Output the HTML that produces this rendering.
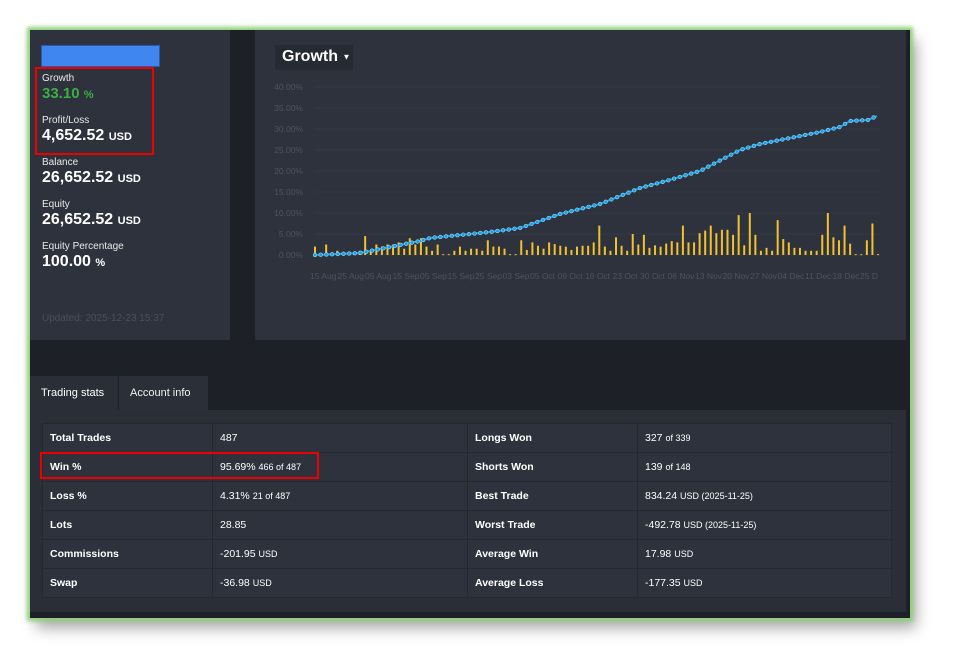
<!DOCTYPE html><html><head><meta charset="utf-8"><style>
*{margin:0;padding:0;box-sizing:border-box}
body{width:960px;height:667px;background:#fff;font-family:"Liberation Sans",sans-serif;position:relative;overflow:hidden}
.frame{position:absolute;left:30px;top:30px;width:880px;height:588px;background:#1e2027;box-shadow:0 0 3px 2px #8fd07a,6px 10px 14px rgba(0,0,0,.35)}
.lp{position:absolute;left:0;top:0;width:200px;height:310px;background:#2e323c}
.rp{position:absolute;left:225px;top:0;width:651px;height:310px;background:#2e323c}
.blue{position:absolute;left:11px;top:15px;width:119px;height:22px;background:#3f86f0;border:1px solid #2a5bb0}
.st{position:absolute;left:12px;color:#fff}
.lbl{font-size:10px;color:#e8e8e8}
.val{font-size:16px;font-weight:bold;margin-top:1px}
.val small{font-size:11px}
.red{position:absolute;border:2px solid #e00}
.upd{position:absolute;left:12px;top:283px;font-size:10px;color:#4a4f5a}
.gbtn{position:absolute;left:20px;top:15px;width:78px;height:25px;background:#262a32;color:#fff;font-size:16px;font-weight:bold;padding:3px 7px;white-space:nowrap}
.tabs{position:absolute;top:346px;left:0;height:34px}
.tab{position:absolute;top:0;height:34px;font-size:11px;color:#fff;padding:11px 11px;white-space:nowrap}
.cont{position:absolute;left:0;top:380px;width:876px;height:202px;background:#2a2e37}
table{position:absolute;left:12px;top:13px;width:850px;border-collapse:collapse}
td{height:29px;border:1px solid #252830;background:#2e323c;font-size:10.5px;color:#fff;padding:0 7px}
td.k{font-weight:bold}
td small{font-size:9px}
</style></head><body>
<div class="frame" style="box-shadow:0 0 4px 3px #8fd07a,6px 10px 14px rgba(0,0,0,.35)">
<div class="lp">
<div class="blue"></div>
<div class="st" style="top:43px"><div class="lbl">Growth</div><div class="val" style="color:#3cb043;font-size:15px">33.10 <small>%</small></div></div>
<div class="st" style="top:85px"><div class="lbl">Profit/Loss</div><div class="val">4,652.52 <small>USD</small></div></div>
<div class="st" style="top:127px"><div class="lbl">Balance</div><div class="val">26,652.52 <small>USD</small></div></div>
<div class="st" style="top:169px"><div class="lbl">Equity</div><div class="val">26,652.52 <small>USD</small></div></div>
<div class="st" style="top:211px"><div class="lbl">Equity Percentage</div><div class="val">100.00 <small>%</small></div></div>
<div class="upd">Updated: 2025-12-23 15:37</div>
<div class="red" style="left:5px;top:37px;width:119px;height:88px"></div>
</div>
<div class="rp">
<div class="gbtn">Growth <span style="font-size:8px;vertical-align:middle">▼</span></div>
<svg id="ch" width="651" height="310" style="position:absolute;left:0;top:0"></svg>
</div>
<div class="tabs">
<div class="tab" style="left:0;width:88px;background:#2a2e37">Trading stats</div>
<div class="tab" style="left:88px;width:90px;background:#2b2f38;color:#f0f0f0;top:0;border-left:1px solid #1e2027">Account info</div>
</div>
<div class="cont">
<table>
<tr><td class="k" style="width:170px">Total Trades</td><td style="width:255px">487</td><td class="k" style="width:170px">Longs Won</td><td>327 <small>of 339</small></td></tr>
<tr><td class="k">Win %</td><td>95.69% <small>466 of 487</small></td><td class="k">Shorts Won</td><td>139 <small>of 148</small></td></tr>
<tr><td class="k">Loss %</td><td>4.31% <small>21 of 487</small></td><td class="k">Best Trade</td><td>834.24 <small>USD (2025-11-25)</small></td></tr>
<tr><td class="k">Lots</td><td>28.85</td><td class="k">Worst Trade</td><td>-492.78 <small>USD (2025-11-25)</small></td></tr>
<tr><td class="k">Commissions</td><td>-201.95 <small>USD</small></td><td class="k">Average Win</td><td>17.98 <small>USD</small></td></tr>
<tr><td class="k">Swap</td><td>-36.98 <small>USD</small></td><td class="k">Average Loss</td><td>-177.35 <small>USD</small></td></tr>
</table>
<div class="red" style="left:10px;top:42px;width:279px;height:27px"></div>
</div>
</div>
<script>
var s=document.getElementById('ch'),h='',ox=255,oy=30;
function X(x){return x-ox}function Y(y){return y-oy}
for(var i=0;i<=8;i++){var y=255-i*21;h+='<line x1="'+X(315)+'" x2="'+X(880)+'" y1="'+Y(y)+'" y2="'+Y(y)+'" stroke="#343844"/>';
h+='<text x="'+X(303)+'" y="'+(Y(y)+3)+'" fill="#4e5360" font-size="8.5" text-anchor="end" font-family="Liberation Sans">'+(i*5)+'.00%</text>';}
var bh=[2,0,2.5,0.5,1,0.5,0.3,0.3,1,4.5,1,2.5,2,2.5,2.5,3,1.5,4,2.5,4,2,1,2.5,0.2,0.2,1,2,1,1.5,1.5,1,3.5,2,2,1.5,0.2,0.2,3.5,1.2,3,2.2,1.5,3,2.6,2.2,2,1.2,2,2.2,2.2,3,7,2,1,4.2,2.2,1,5,2.5,4.8,1.7,2.3,2,2.7,3.3,3,7,3,3,5.2,5.8,7,5.2,6,6,4.8,9.5,2.3,10,4.8,1,1.7,1,8.3,3.8,3,1.7,1.7,1,1,1,4.8,10,4.2,3.5,7,2.7,0.2,0.2,3.5,7.5,0.2];
var n=bh.length,dx=(878-315)/(n-1);
for(var i=0;i<n;i++){var x=315+i*dx,hh=bh[i]*4.2;h+='<rect x="'+(X(x)-1)+'" y="'+(Y(255)-hh)+'" width="2" height="'+Math.max(hh,1)+'" fill="#f0c232"/>';}
var P=[[315,255],[360,253],[400,245],[410,243],[420,241],[430,238],[490,232],[520,228],[560,214],[600,204],[640,188],[666,181],[700,171],[740,150],[760,144],[800,136],[820,132],[840,127],[850,121],[868,120],[877,116]];
var pts=P.map(function(p){return X(p[0])+','+Y(p[1])}).join(' ');
h+='<polyline points="'+pts+'" fill="none" stroke="#1a9ee0" stroke-width="2"/>';
function yat(x){for(var k=0;k<P.length-1;k++){if(x<=P[k+1][0]){var t=(x-P[k][0])/(P[k+1][0]-P[k][0]);return P[k][1]+t*(P[k+1][1]-P[k][1]);}}return P[P.length-1][1];}
for(var x=315;x<=877;x+=5.7){h+='<circle cx="'+X(x)+'" cy="'+Y(yat(x))+'" r="1.8" fill="#1a9ee0" stroke="#9fdcff" stroke-width="0.6"/>';}
var lab=['15 Aug','25 Aug','05 Aug','15 Sep','05 Sep','15 Sep','25 Sep','03 Sep','05 Oct','09 Oct','16 Oct','23 Oct','30 Oct','06 Nov','13 Nov','20 Nov','27 Nov','04 Dec','11 Dec','18 Dec','25 D'];
for(var i=0;i<lab.length;i++){h+='<text x="'+(X(310)+i*27.5)+'" y="'+Y(279)+'" fill="#4e5360" font-size="8.5" font-family="Liberation Sans">'+lab[i]+'</text>';}
s.innerHTML=h;
</script>
</body></html>
